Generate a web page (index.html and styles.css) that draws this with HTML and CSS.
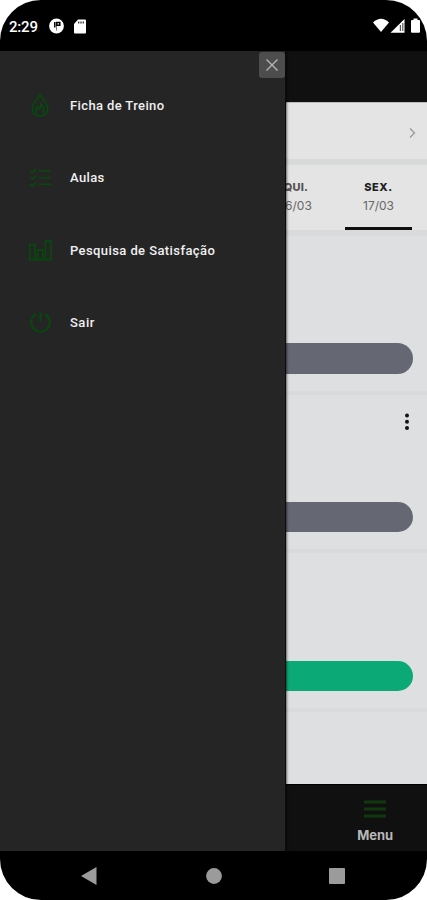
FILE: index.html
```html
<!DOCTYPE html>
<html lang="pt-BR">
<head>
<meta charset="utf-8">
<title>Menu</title>
<link rel="stylesheet" href="styles.css">
</head>
<body>
<div class="phone">
  <header class="status">
    <span class="clock">2:29</span>
    <svg class="app-dot" width="15" height="16" viewBox="0 0 15 16"><circle cx="7.500" cy="8" r="7.400" fill="#fff"/><path d="M5.800 4v5.500M7.800 4.500h3v2.700h-3z" stroke="#000" stroke-width="1.500" fill="none"/><path d="M7.500 8v4.500" stroke="#777" stroke-width="1"/></svg>
    <svg class="sd" width="12" height="15" viewBox="0 0 12 15"><path d="M4 .5h7q1 0 1 1v12q0 1-1 1H1q-1 0-1-1V5z" fill="#fff"/><path d="M4.700 2.500v2M7 2.500v2M9.300 2.500v2" stroke="#333" stroke-width="1.300"/></svg>
    <svg class="signals" width="48" height="16" viewBox="0 0 48 16"><path d="M0 4.500Q8-3 16 4.500L8 14z" fill="#fff"/><path d="M31.500 1v13.700H17.500z" fill="#fff"/><path d="M27.400 7v6M29.800 5v8" stroke="#555" stroke-width="1.200"/><path d="M38 3q0-1 1-1h1.500V.5h4V2H46q1 0 1 1v10.700q0 1-1 1h-7q-1 0-1-1z" fill="#fff"/></svg>
  </header>
  <main class="screen">
    <nav class="drawer">
      <div class="close-row"><button class="close" aria-label="Fechar"><svg width="14" height="14" viewBox="0 0 14 14"><path d="M1.500 1.500l11 11M12.500 1.500l-11 11" stroke="#b4b4b4" stroke-width="1.400"/></svg></button></div>
      <ul class="items">
        <li><svg class="icon" viewBox="0 0 26 26"><path d="M12.500 1.500C10 7 4.500 10 4.500 16.200c0 4.500 3.600 7.500 8 7.500s8-3 8-7.500C20.500 10 15 7 12.500 1.500z"/><path d="M9.500 20.500c-2-2.500-1-4.500 0-6l2 2c2-1.500 2.500-3 2-5 2.500 2.500 4 6 1.500 9"/></svg><span>Ficha de Treino</span></li>
        <li><svg class="icon thin" viewBox="0 0 26 26"><path d="M2.500 6l2 2 4-4M2.500 13l2 2 4-4M2.500 20l2 2 4-4M11.500 6.200h12M11.500 13.200h12M11.500 20.200h12"/></svg><span class="aulas">Aulas</span></li>
        <li><svg class="icon" viewBox="0 0 26 26"><path d="M1.800 7h5.500v15.500H1.800zM10 12.500h5.500v10H10zM18.200 2.800h5.500v19.700h-5.500z"/><path d="M7.300 22.500H10M15.500 22.500h2.700"/></svg><span class="survey">Pesquisa de Satisfação</span></li>
        <li><svg class="icon power" viewBox="0 0 26 26"><path d="M8.500 4.200a9.700 9.700 0 1 0 9 0M13 2.500v10"/></svg><span class="exit">Sair</span></li>
      </ul>
    </nav>
    <section class="page">
      <div class="appbar"></div>
      <div class="select-row"><svg width="7" height="12" viewBox="0 0 7 12"><path d="M1 1.500l4.500 4.500L1 10.500" fill="none" stroke="#999" stroke-width="1.300"/></svg></div>
      <div class="tabs">
        <div class="tab previous"><b>QUI.</b><span>16/03</span></div>
        <div class="tab active"><b>SEX.</b><span>17/03</span></div>
      </div>
      <div class="cards">
        <article class="card"><div class="action"></div></article>
        <article class="card"><svg class="more" width="6" height="18" viewBox="0 0 6 18"><g fill="#141414"><circle cx="3" cy="2.500" r="2"/><circle cx="3" cy="8.800" r="2"/><circle cx="3" cy="15.100" r="2"/></g></svg><div class="action"></div></article>
        <article class="card"><div class="action green"></div></article>
      </div>
      <footer class="bottom">
        <div class="menu"><svg width="22" height="18" viewBox="0 0 22 18"><path d="M0 2h22M0 9h22M0 16h22" stroke="#10380f" stroke-width="3"/></svg><span>Menu</span></div>
      </footer>
    </section>
  </main>
  <footer class="system">
    <svg width="16" height="18" viewBox="0 0 16 18"><path d="M0 9L15.500 0v18z"/></svg>
    <svg class="home" width="16" height="16" viewBox="0 0 16 16"><circle cx="8" cy="8" r="7.900"/></svg>
    <svg width="16" height="16" viewBox="0 0 16 16"><rect width="16" height="16" rx="1"/></svg>
  </footer>
</div>
</body>
</html>
```

FILE: styles.css
```css
* { box-sizing: border-box; }
body { margin: 0; background: #fff; font-family: Roboto, "Liberation Sans", sans-serif; }
svg { display: block; flex: none; }
.phone { width: 427px; height: 900px; border-radius: 41px; overflow: hidden; background: #000; display: flex; flex-direction: column; }

.status { height: 51px; flex: none; display: flex; align-items: center; padding: 1px 6px 0 9px; color: #fff; }
.clock { width: 40px; padding-top: 1px; font-size: 15px; font-weight: 500; letter-spacing: -.2px; }
.sd { margin-left: 9.500px; }
.signals { margin-left: auto; }

.screen { height: 800px; flex: none; display: flex; }
.drawer { width: 286px; flex: none; background: #252525; border-right: 1px solid #0b0b0b; box-shadow: 0 0 3px #000; position: relative; z-index: 1; }
.close-row { height: 27px; display: flex; justify-content: flex-end; padding-top: 1px; }
.close { width: 26px; height: 26px; padding: 0; border: 0; border-radius: 3px; background: #4d4d4d; display: flex; align-items: center; justify-content: center; }
.items { list-style: none; margin: 0; padding: 15px 0 0 28px; }
.items li { height: 72.300px; display: flex; align-items: flex-start; gap: 17px; color: #f0f0f0; font-size: 13px; font-weight: 500; line-height: 26px; white-space: nowrap; }
.items span { letter-spacing: .38px; }
.items .aulas { letter-spacing: .35px; }
.items .survey { letter-spacing: .41px; }
.items .exit { letter-spacing: .5px; }
.icon { width: 25px; height: 25px; fill: none; stroke: #07490d; stroke-width: 1.800; }
.icon.thin { stroke-width: 1.700; }
.icon.power { stroke-width: 2; }

.page { width: 141px; flex: none; overflow: hidden; background: #dddfe1; display: flex; flex-direction: column; }
.appbar { height: 51px; flex: none; background: #101010; }
.select-row { height: 63px; flex: none; display: flex; align-items: center; justify-content: flex-end; padding-right: 11px; padding-top: 4px; background: #e4e4e4; border-bottom: 6px solid #d8d9d9; border-top: 1px solid #bbb; }
.tabs { height: 71px; flex: none; display: flex; justify-content: flex-end; gap: 14px; padding-right: 15px; background: #e4e4e4; border-bottom: 6px solid #d8dadb; }
.tab { width: 67px; height: 65px; flex: none; padding-top: 15px; text-align: center; font-family: Inter, sans-serif; color: #666; border-bottom: 3px solid transparent; }
.tab b, .tab span { display: block; }
.tab b { font-size: 11px; line-height: 15px; font-weight: 800; color: #202020; letter-spacing: .6px; }
.tab span { font-size: 12px; line-height: 20px; margin-top: 1px; }
.tab.previous { padding-right: 3px; }
.tab.previous b { color: #555; letter-spacing: .2px; }
.tab.active { border-color: #101010; }
.cards { flex: 1; }
.card { height: 158.700px; display: flex; flex-direction: column; align-items: flex-end; border-bottom: 4px solid #d8dadb; padding: 0 14.500px 17px 0; }
.card .more { margin: 18px 2.500px 0 0; }
.action { width: 127px; height: 30.500px; margin-top: auto; flex: none; border-radius: 0 15.500px 15.500px 0; background: #656772; }
.action.green { background: #0ba976; }
.bottom { height: 67px; flex: none; background: #101010; display: flex; justify-content: flex-end; padding: 15px 34px 0 0; border-top: 1px solid #000; }
.menu { display: flex; flex-direction: column; align-items: center; gap: 9px; color: #b8b8b8; font: 700 13px/17px Inter, sans-serif; letter-spacing: -.05px; }

.system { height: 49px; flex: none; display: flex; align-items: center; justify-content: space-between; padding: 0 82px 0 81px; fill: #9b9b9b; }
.home { margin-left: 2px; }
```
